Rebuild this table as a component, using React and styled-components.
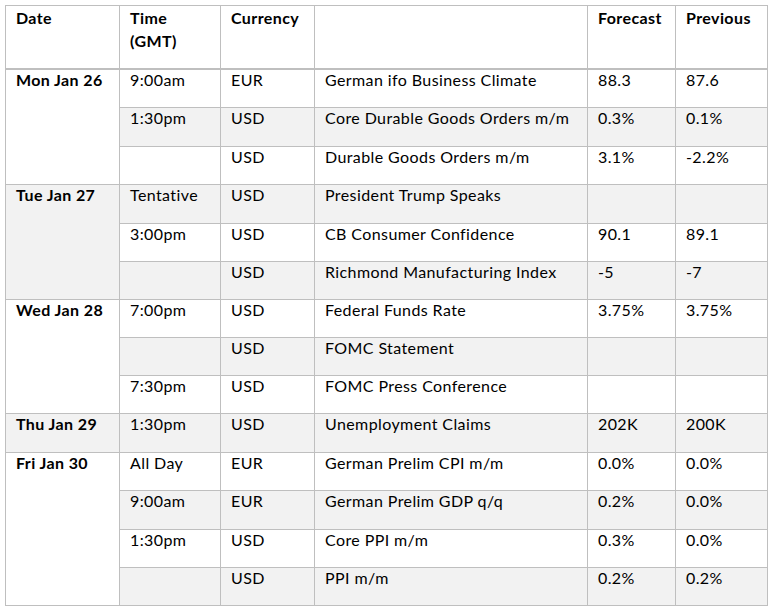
import React from "react";
import styled, { createGlobalStyle } from "styled-components";

const Global = createGlobalStyle`
  html, body { margin: 0; padding: 0; background: #ffffff; }
  body { font-family: Lato, "Open Sans", sans-serif; color: #000; }
`;

const Page = styled.div`
  padding: 5px 0 0 5px;
`;

const Table = styled.table`
  border-collapse: collapse;
  table-layout: fixed;
  width: 762px;
  font-size: 16px;
  letter-spacing: 0.4px;
  line-height: 20px;
`;

const Col = styled.col`
  width: ${(p) => p.$w}px;
`;

const HeadRow = styled.tr`
  height: 63px;
`;

const HeadCell = styled.th`
  border: 1px solid #bfbfbf;
  border-bottom: 2px solid #bfbfbf;
  text-align: left;
  vertical-align: top;
  font-weight: 700;
  padding: 0 10px;
  line-height: 23px;
`;

const Row = styled.tr`
  height: ${(p) => p.$h}px;
`;

const Cell = styled.td`
  border: 1px solid #bfbfbf;
  vertical-align: top;
  padding: 0 10px;
  background: ${(p) => (p.$shade ? "#f2f2f2" : "#ffffff")};
  font-weight: ${(p) => (p.$bold ? 700 : 400)};
  white-space: nowrap;
`;

const cols = [114, 101, 94, 273, 88, 92];
const heights = [39, 39, 38, 39, 38, 38, 38, 38, 38, 39, 38, 39, 38, 38];

const groups = [
  {
    date: "Mon Jan 26",
    rows: [
      ["9:00am", "EUR", "German ifo Business Climate", "88.3", "87.6"],
      ["1:30pm", "USD", "Core Durable Goods Orders m/m", "0.3%", "0.1%"],
      ["", "USD", "Durable Goods Orders m/m", "3.1%", "-2.2%"],
    ],
  },
  {
    date: "Tue Jan 27",
    rows: [
      ["Tentative", "USD", "President Trump Speaks", "", ""],
      ["3:00pm", "USD", "CB Consumer Confidence", "90.1", "89.1"],
      ["", "USD", "Richmond Manufacturing Index", "-5", "-7"],
    ],
  },
  {
    date: "Wed Jan 28",
    rows: [
      ["7:00pm", "USD", "Federal Funds Rate", "3.75%", "3.75%"],
      ["", "USD", "FOMC Statement", "", ""],
      ["7:30pm", "USD", "FOMC Press Conference", "", ""],
    ],
  },
  {
    date: "Thu Jan 29",
    rows: [["1:30pm", "USD", "Unemployment Claims", "202K", "200K"]],
  },
  {
    date: "Fri Jan 30",
    rows: [
      ["All Day", "EUR", "German Prelim CPI m/m", "0.0%", "0.0%"],
      ["9:00am", "EUR", "German Prelim GDP q/q", "0.2%", "0.0%"],
      ["1:30pm", "USD", "Core PPI m/m", "0.3%", "0.0%"],
      ["", "USD", "PPI m/m", "0.2%", "0.2%"],
    ],
  },
];

export default function App() {
  let idx = 0;
  return (
    <Page>
      <Global />
      <Table>
        <colgroup>
          {cols.map((w, i) => (
            <Col key={i} $w={w} />
          ))}
        </colgroup>
        <thead>
          <HeadRow>
            <HeadCell>Date</HeadCell>
            <HeadCell>
              Time
              <br />
              (GMT)
            </HeadCell>
            <HeadCell>Currency</HeadCell>
            <HeadCell></HeadCell>
            <HeadCell>Forecast</HeadCell>
            <HeadCell>Previous</HeadCell>
          </HeadRow>
        </thead>
        <tbody>
          {groups.map((g, gi) =>
            g.rows.map((r, ri) => {
              const i = idx;
              idx += 1;
              return (
                <Row key={`${gi}-${ri}`} $h={heights[i]}>
                  {ri === 0 && (
                    <Cell rowSpan={g.rows.length} $bold $shade={gi % 2 === 1}>
                      {g.date}
                    </Cell>
                  )}
                  {r.map((c, ci) => (
                    <Cell key={ci} $shade={i % 2 === 1}>
                      {c}
                    </Cell>
                  ))}
                </Row>
              );
            })
          )}
        </tbody>
      </Table>
    </Page>
  );
}
